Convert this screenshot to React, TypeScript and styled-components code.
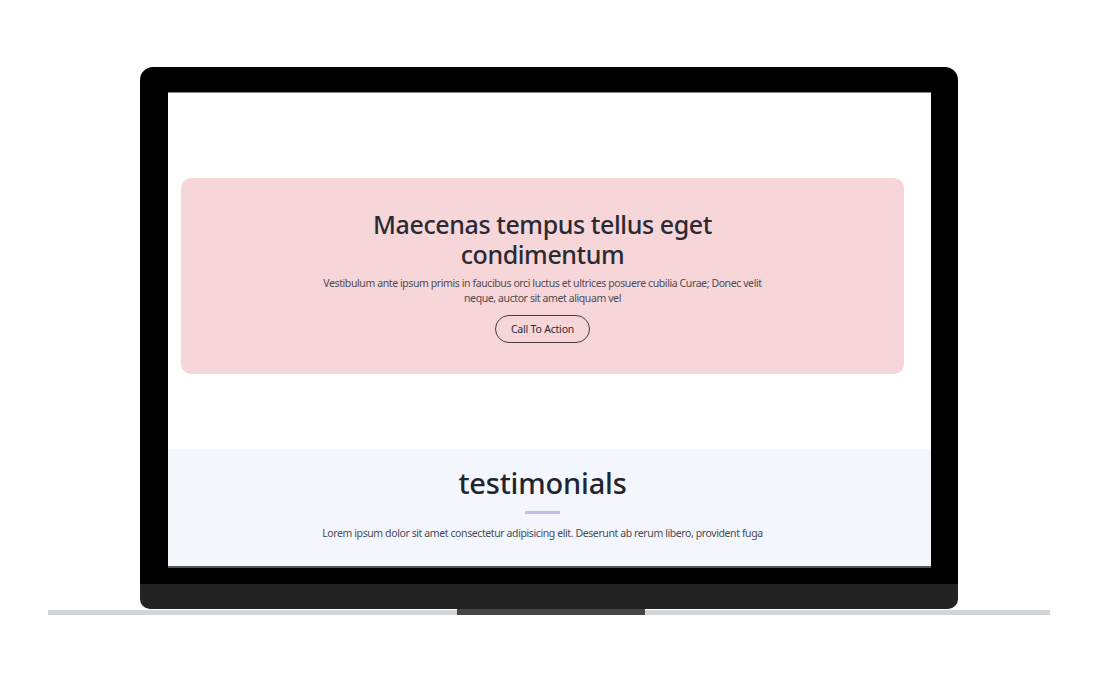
import React from "react";
import styled, { createGlobalStyle } from "styled-components";

const Global = createGlobalStyle`
  html, body { margin: 0; padding: 0; background: #ffffff; }
  body { font-family: "Noto Sans", "Open Sans", sans-serif; }
  * { box-sizing: border-box; }
`;

const Stage = styled.div`
  width: 1119px;
  height: 683px;
  display: flex;
  flex-direction: column;
  align-items: flex-start;
  padding: 67px 0 0 48px;
  overflow: hidden;
`;

const Laptop = styled.div`
  margin-left: 92px;
  width: 818px;
  display: flex;
  flex-direction: column;
`;

const Lid = styled.div`
  background: #000;
  border-radius: 13px 13px 0 0;
  padding: 25px 27px 16px 28px;
`;

const Screen = styled.div`
  width: 763px;
  height: 476px;
  background: #fff;
  overflow: hidden;
  border-top: 1px solid #8a8a8a;
  border-bottom: 2px solid #555;
  display: flex;
  flex-direction: column;
`;

const Chin = styled.div`
  height: 25px;
  background: #232323;
  border-radius: 0 0 10px 10px;
`;

const Base = styled.div`
  display: flex;
  align-items: flex-start;
  width: 1002px;
`;

const BaseSide = styled.div<{ $w?: number }>`
  height: 5px;
  margin-top: 1px;
  background: #d2d5d9;
  ${(p) => (p.$w ? `width: ${p.$w}px;` : "flex: 1;")}
`;

const Notch = styled.div`
  width: 188px;
  height: 6px;
  background: #454545;
`;

const HeroWrap = styled.div`
  padding: 85px 27px 0 13px;
`;

const HeroCard = styled.section`
  background: #f7d6da;
  border-radius: 10px;
  height: 196px;
  padding-top: 31px;
  display: flex;
  flex-direction: column;
  align-items: center;
`;

const HeroTitle = styled.h1`
  margin: 0;
  max-width: 420px;
  text-align: center;
  font-size: 25px;
  line-height: 30px;
  font-weight: 500;
  letter-spacing: -0.4px;
  color: #2a2a33;
`;

const HeroText = styled.p`
  margin: 7px 0 0;
  max-width: 450px;
  text-align: center;
  font-size: 10.5px;
  line-height: 15px;
  letter-spacing: -0.4px;
  color: #4f4a50;
`;

const CTA = styled.button`
  margin-top: 9px;
  width: 95px;
  height: 28px;
  border: 1.5px solid #4a3a42;
  border-radius: 14px;
  background: transparent;
  font-family: inherit;
  font-size: 10.5px;
  letter-spacing: -0.2px;
  color: #2e2a30;
  padding: 0;
`;

const Testimonials = styled.section`
  margin-top: 75px;
  flex: 1;
  background: #f3f7fd;
  display: flex;
  flex-direction: column;
  align-items: center;
  padding: 14px 14px 0 0;
`;

const TTitle = styled.h2`
  margin: 0;
  font-size: 29px;
  line-height: 40px;
  font-weight: 500;
  letter-spacing: -0.2px;
  color: #23252e;
`;

const Bar = styled.div`
  margin-top: 8px;
  width: 35px;
  height: 3px;
  background: #c1bee8;
`;

const TText = styled.p`
  margin: 12px 0 0;
  font-size: 10.5px;
  line-height: 15px;
  letter-spacing: -0.4px;
  color: #4b4b52;
`;

export default function App() {
  return (
    <>
      <Global />
      <Stage>
        <Laptop>
          <Lid>
            <Screen>
              <HeroWrap>
                <HeroCard>
                  <HeroTitle>Maecenas tempus tellus eget condimentum</HeroTitle>
                  <HeroText>
                    Vestibulum ante ipsum primis in faucibus orci luctus et ultrices posuere cubilia Curae; Donec velit
                    neque, auctor sit amet aliquam vel
                  </HeroText>
                  <CTA>Call To Action</CTA>
                </HeroCard>
              </HeroWrap>
              <Testimonials>
                <TTitle>testimonials</TTitle>
                <Bar />
                <TText>
                  Lorem ipsum dolor sit amet consectetur adipisicing elit. Deserunt ab rerum libero, provident fuga
                </TText>
              </Testimonials>
            </Screen>
          </Lid>
          <Chin />
        </Laptop>
        <Base>
          <BaseSide $w={409} />
          <Notch />
          <BaseSide />
        </Base>
      </Stage>
    </>
  );
}
